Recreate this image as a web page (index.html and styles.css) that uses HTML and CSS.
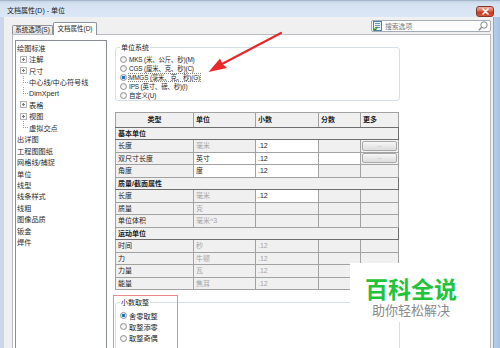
FILE: index.html
```html
<!DOCTYPE html>
<html>
<head>
<meta charset="utf-8">
<link rel="stylesheet" href="styles.css">
</head>
<body>
<div class="win">
  <div class="titlebar">
    <span class="title">文档属性(D) - 单位</span>
    <div class="close"><svg width="9" height="7" viewBox="0 0 9 7"><path d="M2 1 L7 6 M7 1 L2 6" stroke="#fff" stroke-width="1.6" stroke-linecap="round"/></svg></div>
  </div>
  <div class="body">
    <div class="frame-l"></div>
    <div class="content">
      <div class="tabrow">
        <div class="tab">系统选项(S)</div>
        <div class="tab active">文档属性(D)</div>
        <div class="search">
          <svg class="s-ico" width="9" height="10" viewBox="0 0 9 10"><rect x="0.5" y="0.5" width="8" height="9" fill="#e9f1fb" stroke="#4d7fb5"/><path d="M2 2.5h5M2 4.5h5M2 6.5h5" stroke="#4d7fb5" stroke-width="0.8"/><path d="M0.5 7.5 L2 9 L4.5 6" stroke="#2f9a2f" stroke-width="1.3" fill="none"/></svg>
          <span class="s-text">搜索选项</span>
          <svg class="s-mag" width="10" height="10" viewBox="0 0 10 10"><circle cx="6" cy="4" r="3.2" fill="none" stroke="#8a8a8a" stroke-width="1"/><path d="M3.7 6.3 L0.8 9.2" stroke="#8a8a8a" stroke-width="1.4"/></svg>
        </div>
      </div>
      <div class="page">
        <div class="tree">
          <div class="ti">绘图标准</div>
          <div class="ti l1"><svg class="exp" width="7" height="7" viewBox="0 0 7 7"><rect x="0.5" y="0.5" width="6" height="6" fill="#f8f8f8" stroke="#b4b4b4"/><path d="M2 3.5h3M3.5 2v3" stroke="#7a7a7a"/></svg>注解</div>
          <div class="ti l1"><svg class="exp" width="7" height="7" viewBox="0 0 7 7"><rect x="0.5" y="0.5" width="6" height="6" fill="#f8f8f8" stroke="#b4b4b4"/><path d="M2 3.5h3M3.5 2v3" stroke="#7a7a7a"/></svg>尺寸</div>
          <div class="ti l2"><span class="elb"></span>中心线/中心符号线</div>
          <div class="ti l2"><span class="elb"></span>DimXpert</div>
          <div class="ti l1"><svg class="exp" width="7" height="7" viewBox="0 0 7 7"><rect x="0.5" y="0.5" width="6" height="6" fill="#f8f8f8" stroke="#b4b4b4"/><path d="M2 3.5h3M3.5 2v3" stroke="#7a7a7a"/></svg>表格</div>
          <div class="ti l1"><svg class="exp" width="7" height="7" viewBox="0 0 7 7"><rect x="0.5" y="0.5" width="6" height="6" fill="#f8f8f8" stroke="#b4b4b4"/><path d="M2 3.5h3M3.5 2v3" stroke="#7a7a7a"/></svg>视图</div>
          <div class="ti l2"><span class="elb"></span>虚拟交点</div>
          <div class="ti">出详图</div>
          <div class="ti">工程图图纸</div>
          <div class="ti">网格线/捕捉</div>
          <div class="ti">单位</div>
          <div class="ti">线型</div>
          <div class="ti">线条样式</div>
          <div class="ti">线粗</div>
          <div class="ti">图像品质</div>
          <div class="ti">钣金</div>
          <div class="ti">焊件</div>
        </div>
        <div class="main">
          <div class="group g1">
            <span class="g-title">单位系统</span>
            <div class="opt"><span class="radio"></span><span>MKS (米、公斤、秒)(M)</span></div>
            <div class="opt"><span class="radio"></span><span>CGS (厘米、克、秒)(C)</span></div>
            <div class="opt"><span class="radio on"></span><span class="focus">MMGS (毫米、克、秒)(G)</span></div>
            <div class="opt"><span class="radio"></span><span>IPS (英寸、磅、秒)(I)</span></div>
            <div class="opt"><span class="radio"></span><span>自定义(U)</span></div>
          </div>
          <table class="units">
            <colgroup><col class="c1"><col class="c2"><col class="c3"><col class="c4"><col class="c5"></colgroup>
            <tr class="hdr"><th class="ctr">类型</th><th>单位</th><th>小数</th><th>分数</th><th>更多</th></tr>
            <tr class="sec"><td colspan="5">基本单位</td></tr>
            <tr><td>长度</td><td class="dim">毫米</td><td class="w">.12</td><td></td><td class="bt"><span class="btn">...</span></td></tr>
            <tr><td>双尺寸长度</td><td class="w">英寸</td><td class="w">.12</td><td class="w"></td><td class="bt"><span class="btn">...</span></td></tr>
            <tr><td>角度</td><td class="w">度</td><td class="w">.12</td><td></td><td></td></tr>
            <tr class="sec"><td colspan="5">质量/截面属性</td></tr>
            <tr><td>长度</td><td class="dim">毫米</td><td class="w">.12</td><td></td><td></td></tr>
            <tr><td>质量</td><td class="dim">克</td><td></td><td></td><td></td></tr>
            <tr><td>单位体积</td><td class="dim">毫米^3</td><td></td><td></td><td></td></tr>
            <tr class="sec"><td colspan="5">运动单位</td></tr>
            <tr><td>时间</td><td class="dim">秒</td><td class="dim">.12</td><td></td><td></td></tr>
            <tr><td>力</td><td class="dim">牛顿</td><td class="dim">.12</td><td></td><td></td></tr>
            <tr><td>力量</td><td class="dim">瓦</td><td class="dim">.12</td><td></td><td></td></tr>
            <tr><td>能量</td><td class="dim">焦耳</td><td class="dim">.12</td><td></td><td></td></tr>
          </table>
          <div class="group g2">
            <span class="g-title">小数取整</span>
            <div class="opt2"><span class="radio on"></span><span>舍零取整</span></div>
            <div class="opt2"><span class="radio"></span><span>取整添零</span></div>
            <div class="opt2"><span class="radio"></span><span>取整奇偶</span></div>
          </div>
        </div>
      </div>
    </div>
    <div class="frame-r"></div>
  </div>

  <svg class="arrow" width="500" height="348" viewBox="0 0 500 348">
    <path d="M281 33 L222 64" stroke="#e8282b" stroke-width="2.2" stroke-linecap="round"/>
    <path d="M208.5 72 L220 58.5 L222.5 64 L227 68 Z" fill="#e8282b"/>
  </svg>
  <div class="highlight"></div>
  <div class="watermark">
    <div class="wm1">百科全说</div>
    <div class="wm2">助你轻松解决</div>
  </div>
</div>
</body>
</html>
```

FILE: styles.css
```css
html, body {
  margin: 0;
  padding: 0;
}
body {
  width: 500px;
  height: 348px;
  overflow: hidden;
  background: #fff;
  font-family: "Liberation Sans", "Noto Sans CJK SC", sans-serif;
  font-size: 7px;
  color: #1e1e1e;
}
.win {
  position: relative;
  width: 500px;
  height: 348px;
  display: flex;
  flex-direction: column;
  overflow: hidden;
}
.titlebar {
  height: 17px;
  flex: none;
  box-sizing: border-box;
  display: flex;
  align-items: center;
  justify-content: space-between;
  padding: 0 6px 0 7px;
  background: linear-gradient(#c3d3e7 0, #d5e2f2 3px, #dbe7f6 100%);
  border-top: 1px solid #a6b6ca;
}
.title {
  font-size: 7px;
  color: #1a1a1a;
  margin-top: 2px;
}
.close {
  width: 18px;
  height: 11px;
  box-sizing: border-box;
  border-radius: 3px;
  border: 1px solid #8a3526;
  background: linear-gradient(#eab1a5 0, #d86c55 45%, #c23b22 55%, #d2583c 100%);
  display: flex;
  align-items: center;
  justify-content: center;
  margin-top: 4px;
}
.body {
  flex: 1;
  display: flex;
  min-height: 0;
}
.frame-l {
  width: 4px;
  flex: none;
  background: #c9d7e8;
}
.frame-r {
  width: 7px;
  flex: none;
  box-sizing: border-box;
  border-left: 1px solid #8aa6c8;
  background: linear-gradient(90deg, #b7cde8, #a9c2e2);
}
.content {
  flex: 1;
  display: flex;
  flex-direction: column;
  min-width: 0;
  background: #f0f0f0;
  padding: 0 2px 0 8px;
}
.tabrow {
  height: 17px;
  flex: none;
  display: flex;
  align-items: flex-end;
}
.tab {
  height: 9px;
  box-sizing: border-box;
  width: 41px;
  border: 1px solid #8e939b;
  border-bottom: none;
  border-radius: 2px 2px 0 0;
  background: linear-gradient(#f4f4f4, #e2e2e2);
  font-size: 6.5px;
  line-height: 8px;
  text-align: center;
  white-space: nowrap;
}
.tab.active {
  width: 44px;
  height: 13px;
  margin-bottom: -1px;
  background: #fff;
  position: relative;
  z-index: 1;
  line-height: 11px;
}
.search {
  margin-left: auto;
  align-self: flex-start;
  margin-top: 3px;
  width: 120px;
  height: 12px;
  box-sizing: border-box;
  border: 1px solid #a7adb6;
  border-radius: 2px;
  background: #fcfcfc;
  display: flex;
  align-items: center;
  padding: 0 2px 0 1px;
}
.s-text {
  margin-left: 3px;
  color: #7a7a7a;
  font-size: 6.8px;
  flex: 1;
}
.page {
  flex: 1;
  min-height: 0;
  background: #fff;
  border: 1px solid #b9bcc1;
  border-bottom: none;
  display: flex;
  align-items: flex-start;
  padding: 5px 0 0 2px;
  overflow: hidden;
}
.tree {
  width: 92px;
  height: 330px;
  flex: none;
  box-sizing: border-box;
  border: 1px solid #898e96;
  background: #fff;
  padding-top: 1px;
  font-size: 7.2px;
}
.ti {
  height: 11.45px;
  display: flex;
  align-items: center;
  padding-left: 1px;
  white-space: nowrap;
  color: #2a2a2a;
}
.ti.l1 { padding-left: 4px; }
.ti.l2 { padding-left: 7px; }
.exp {
  flex: none;
  margin-right: 2px;
}
.elb {
  width: 4px;
  height: 6px;
  margin-top: -6px;
  margin-right: 1px;
  border-left: 1px dotted #a0a0a0;
  border-bottom: 1px dotted #a0a0a0;
  flex: none;
}
.main {
  margin-left: 8px;
  width: 285px;
  flex: none;
  padding-top: 7px;
}
.group {
  box-sizing: border-box;
  border: 1px solid #d5dfe5;
  border-radius: 3px;
  padding-left: 3px;
}
.g1 {
  height: 54px;
}
.g2 {
  height: 70px;
  margin-top: 12px;
}
.g-title {
  display: inline-block;
  background: #fff;
  padding: 0 1px;
  margin-left: 1px;
  margin-top: -5px;
  height: 9px;
  line-height: 9px;
  vertical-align: top;
}
.opt {
  height: 9px;
  display: flex;
  align-items: center;
  white-space: nowrap;
  font-size: 6.4px;
  letter-spacing: -0.15px;
}
.opt2 {
  height: 11.3px;
  display: flex;
  align-items: center;
  white-space: nowrap;
  font-size: 7.2px;
}
.g2 .g-title { margin-bottom: 3px; }
.radio {
  width: 7px;
  height: 7px;
  box-sizing: border-box;
  border-radius: 50%;
  border: 1px solid #909396;
  background: radial-gradient(circle at 50% 60%, #ffffff 0, #dedede 100%);
  margin: 0 2px 0 1px;
  flex: none;
}
.radio.on {
  background: radial-gradient(circle, #1f5ea8 0, #2f78c2 1.4px, #dce8f4 2px, #eef3f8 100%);
}
.focus {
  outline: 1px dotted #8a8a8a;
  outline-offset: 0;
  line-height: 7px;
}
.units {
  margin-top: 11px;
  border-collapse: collapse;
  table-layout: fixed;
  width: 283px;
  border: 1px solid #7c7c7c;
  font-size: 7px;
}
.units col.c1 { width: 78px; }
.units col.c2 { width: 62px; }
.units col.c3 { width: 63px; }
.units col.c4 { width: 42px; }
.units col.c5 { width: 38px; }
.units tr { height: 12.5px; }
.units tr.hdr { height: 14.5px; }
.units th,
.units td {
  border: 1px solid #a2a2a2;
  background: #f0f0f0;
  padding: 0 2px;
  line-height: 9px;
  text-align: left;
  white-space: nowrap;
  overflow: hidden;
  color: #1e1e1e;
}
.units th {
  font-weight: bold;
  border-bottom: 1px solid #6e6e6e;
}
.units th.ctr { text-align: center; }
.units tr.sec td {
  font-weight: bold;
  border-bottom: 1px solid #6e6e6e;
  border-right: 1px solid #6e6e6e;
}
.units td.w { background: #fff; }
.units td.dim { color: #a5a5a5; }
.units td.bt { padding: 0 1px; }
.btn {
  display: block;
  height: 10px;
  box-sizing: border-box;
  border: 1px solid #a9a9a9;
  border-radius: 2px;
  background: linear-gradient(#f6f6f6, #dcdcdc);
  color: #9a9a9a;
  font-size: 6px;
  line-height: 6px;
  text-align: center;
}
.arrow {
  position: absolute;
  left: 0;
  top: 0;
  pointer-events: none;
}
.highlight {
  position: absolute;
  left: 113px;
  top: 295px;
  width: 65px;
  height: 70px;
  box-sizing: border-box;
  border: 1px solid #f08a8a;
}
.watermark {
  position: absolute;
  left: 350px;
  top: 263px;
  width: 122px;
  height: 59px;
  background: #fff;
  display: flex;
  flex-direction: column;
  align-items: center;
  padding-top: 14px;
  box-sizing: border-box;
  font-family: "Noto Sans CJK SC", sans-serif;
}
.wm1 {
  font-size: 23px;
  line-height: 22px;
  font-weight: bold;
  color: #1fc43a;
}
.wm2 {
  font-size: 13px;
  line-height: 13px;
  color: #8a8a8a;
  margin-top: 4px;
}
```
